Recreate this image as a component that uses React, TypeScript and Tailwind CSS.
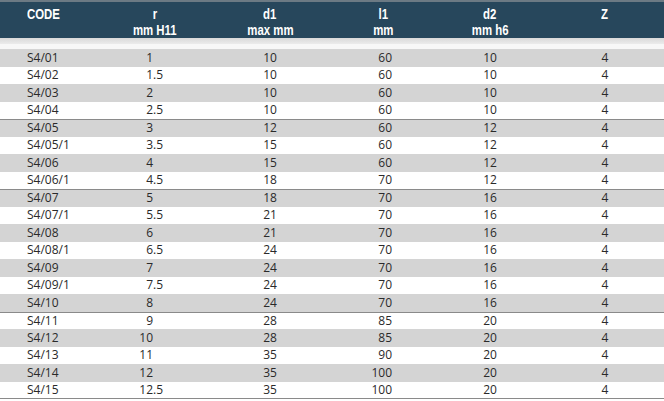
import React from 'react';

type Row = { code: string; r: string; d1: string; l1: string; d2: string; z: string };

const rows: Row[] = [
  { code: 'S4/01', r: '1', d1: '10', l1: '60', d2: '10', z: '4' },
  { code: 'S4/02', r: '1.5', d1: '10', l1: '60', d2: '10', z: '4' },
  { code: 'S4/03', r: '2', d1: '10', l1: '60', d2: '10', z: '4' },
  { code: 'S4/04', r: '2.5', d1: '10', l1: '60', d2: '10', z: '4' },
  { code: 'S4/05', r: '3', d1: '12', l1: '60', d2: '12', z: '4' },
  { code: 'S4/05/1', r: '3.5', d1: '15', l1: '60', d2: '12', z: '4' },
  { code: 'S4/06', r: '4', d1: '15', l1: '60', d2: '12', z: '4' },
  { code: 'S4/06/1', r: '4.5', d1: '18', l1: '70', d2: '12', z: '4' },
  { code: 'S4/07', r: '5', d1: '18', l1: '70', d2: '16', z: '4' },
  { code: 'S4/07/1', r: '5.5', d1: '21', l1: '70', d2: '16', z: '4' },
  { code: 'S4/08', r: '6', d1: '21', l1: '70', d2: '16', z: '4' },
  { code: 'S4/08/1', r: '6.5', d1: '24', l1: '70', d2: '16', z: '4' },
  { code: 'S4/09', r: '7', d1: '24', l1: '70', d2: '16', z: '4' },
  { code: 'S4/09/1', r: '7.5', d1: '24', l1: '70', d2: '16', z: '4' },
  { code: 'S4/10', r: '8', d1: '24', l1: '70', d2: '16', z: '4' },
  { code: 'S4/11', r: '9', d1: '28', l1: '85', d2: '20', z: '4' },
  { code: 'S4/12', r: '10', d1: '28', l1: '85', d2: '20', z: '4' },
  { code: 'S4/13', r: '11', d1: '35', l1: '90', d2: '20', z: '4' },
  { code: 'S4/14', r: '12', d1: '35', l1: '100', d2: '20', z: '4' },
  { code: 'S4/15', r: '12.5', d1: '35', l1: '100', d2: '20', z: '4' },
];

// rows that start a new group get a grey rule on top
const groupStarts = [4, 8, 15];

const HeadCell: React.FC<{ w: string; top: string; sub?: string }> = ({ w, top, sub }) => (
  <div className={`${w} flex flex-col items-center`}>
    <span className="inline-block scale-x-[0.76]">{top}</span>
    {sub && <span className="inline-block scale-x-[0.76] whitespace-nowrap">{sub}</span>}
  </div>
);

const App: React.FC = () => {
  return (
    <div className="w-[664px] h-[401px] bg-white overflow-hidden">
      {/* header */}
      <div className="h-[38px] bg-[#27475c] border-t-2 border-[#6c7a84] flex text-white font-bold text-[15px] leading-[16px] pt-[4px] font-['Liberation_Sans',Arial,sans-serif]">
        <div className="w-[100px] pl-[27px]">
          <span className="inline-block scale-x-[0.76] origin-left">CODE</span>
        </div>
        <HeadCell w="w-[110px]" top="r" sub="mm H11" />
        <HeadCell w="w-[120px]" top="d1" sub="max mm" />
        <HeadCell w="w-[106px]" top="l1" sub="mm" />
        <div className="w-[4px]" />
        <HeadCell w="w-[100px]" top="d2" sub="mm h6" />
        <div className="w-[6px]" />
        <HeadCell w="w-[118px]" top="Z" />
      </div>
      <div className="h-[6px] bg-gradient-to-b from-[#d9d9d9] to-[#ebebeb]" />
      <div className="h-[5px] bg-[#f7f7f7]" />

      {/* body */}
      <div className="text-[12px] text-[#2a2a2a] font-['Open_Sans','Noto_Sans',sans-serif]">
        {rows.map((row, i) => {
          const [whole, frac] = row.r.split('.');
          return (
            <div
              key={row.code}
              className={`h-[17.5px] flex items-center ${i % 2 === 0 ? 'bg-[#d4d4d4]' : 'bg-white'} ${
                groupStarts.includes(i) ? 'border-t border-[#8a8a8a]' : ''
              } ${i === rows.length - 1 ? 'border-b border-[#8a8a8a]' : ''}`}
            >
              <div className="w-[100px] pl-[27px]">{row.code}</div>
              <div className="w-[110px] flex">
                <span className="w-[53px] text-right">{whole}</span>
                <span>{frac ? '.' + frac : ''}</span>
              </div>
              <div className="w-[120px] text-center">{row.d1}</div>
              <div className="w-[110px] text-right pr-[48px]">{row.l1}</div>
              <div className="w-[100px] text-center">{row.d2}</div>
              <div className="w-[124px] text-center pl-[6px]">{row.z}</div>
            </div>
          );
        })}
      </div>
    </div>
  );
};

export default App;
